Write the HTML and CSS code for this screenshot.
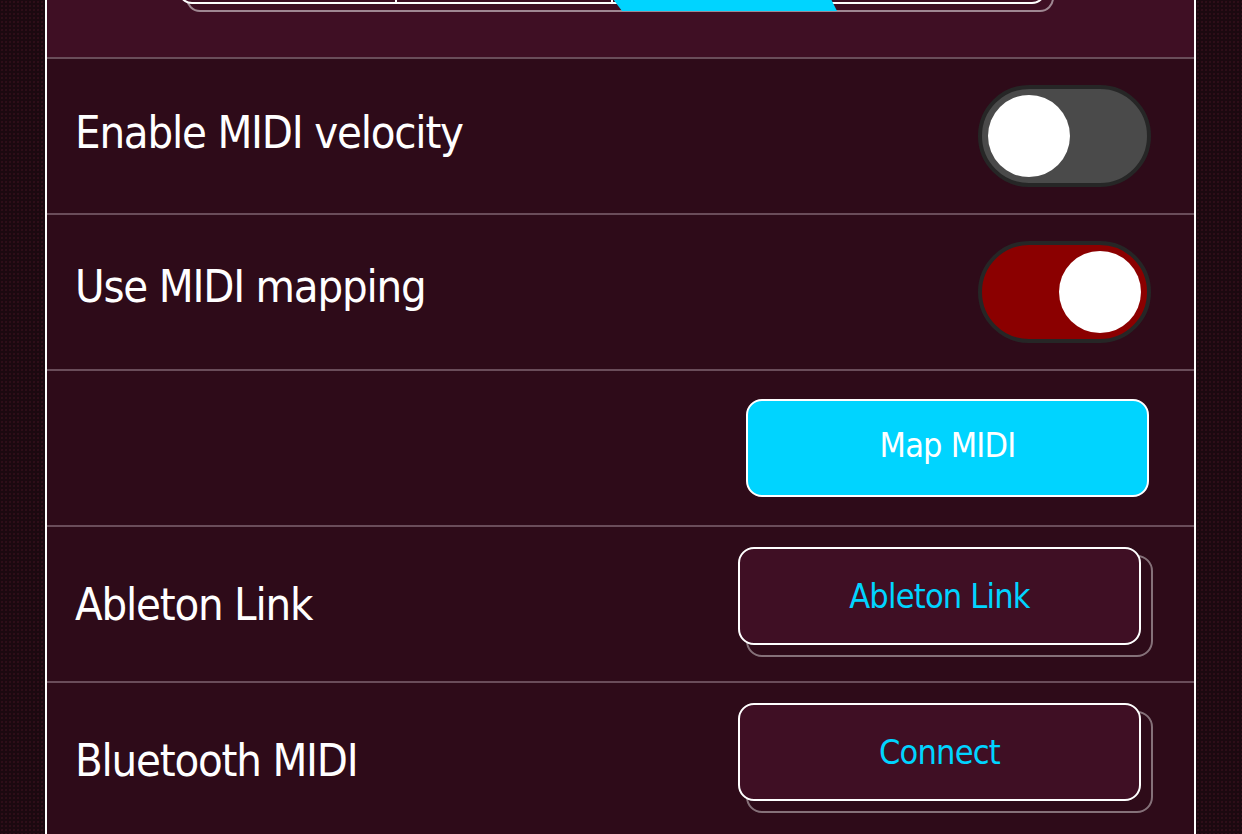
FILE: index.html
```html
<!DOCTYPE html>
<html lang="en">
<head>
<meta charset="utf-8">
<title>MIDI Settings</title>
<link rel="stylesheet" href="styles.css">
</head>
<body>
<div class="panel">
  <div class="top">
    <div class="seg-wrap">
      <div class="seg-shadow"></div>
      <div class="seg">
        <div class="seg-cell"></div>
        <div class="seg-cell"></div>
        <div class="seg-cell"></div>
        <div class="seg-cell seg-cell--last"></div>
        <div class="seg-pressed"></div>
      </div>
    </div>
  </div>

  <div class="row">
    <span class="label label--lift">Enable MIDI velocity</span>
    <div class="toggle"><div class="knob"></div></div>
  </div>

  <div class="row">
    <span class="label label--lift2">Use MIDI mapping</span>
    <div class="toggle toggle--on"><div class="knob"></div></div>
  </div>

  <div class="row row--end">
    <div class="btn-wrap btn-wrap--pressed">
      <div class="btn btn--active">Map MIDI</div>
    </div>
  </div>

  <div class="row">
    <span class="label">Ableton Link</span>
    <div class="btn-wrap">
      <div class="btn">Ableton Link</div>
    </div>
  </div>

  <div class="row">
    <span class="label">Bluetooth MIDI</span>
    <div class="btn-wrap">
      <div class="btn">Connect</div>
    </div>
  </div>
</div>
</body>
</html>
```

FILE: styles.css
```css
* { box-sizing: border-box; }

html, body {
  margin: 0;
  padding: 0;
  height: 834px;
  overflow: hidden;
}

body {
  background-color: #1b0910;
  background-image: radial-gradient(rgba(110, 30, 55, 0.35) 0.6px, transparent 0.9px);
  background-size: 4px 4px;
  font-family: "DejaVu Sans Condensed", "DejaVu Sans", sans-serif;
  color: #ffffff;
}

.panel {
  margin-left: 45px;
  width: 1151px;
  min-height: 834px;
  background: #2e0b19;
  border-left: 2px solid #ffffff;
  border-right: 2px solid #ffffff;
}

.top {
  height: 59px;
  background: #3f0f24;
  border-bottom: 2px solid #6a4d5a;
  overflow: hidden;
}

.seg-wrap {
  position: relative;
  width: 868px;
  height: 90px;
  margin-left: 131px;
  margin-top: -86px;
}

.seg-shadow {
  position: absolute;
  left: 8px;
  top: 8px;
  width: 868px;
  height: 90px;
  border: 2px solid rgba(255, 255, 255, 0.5);
  border-radius: 14px;
}

.seg {
  position: relative;
  display: flex;
  width: 868px;
  height: 90px;
  border: 2px solid #ffffff;
  border-radius: 14px;
  background: #3f0f24;
}

.seg-cell {
  flex: 1;
  border-right: 2px solid #ffffff;
}

.seg-cell--last { border-right: none; }

.seg-pressed {
  position: absolute;
  left: 433px;
  bottom: -9px;
  width: 224px;
  height: 12px;
  background: #00d4ff;
  clip-path: polygon(0 0, 218px 0, 224px 100%, 9px 100%);
}

.row {
  display: flex;
  align-items: center;
  justify-content: space-between;
  height: 156px;
  padding: 0 43px 0 28px;
  border-bottom: 2px solid #6a4d5a;
}

.row--end { justify-content: flex-end; }

.label {
  font-size: 45px;
  letter-spacing: -1.2px;
  line-height: 1;
  color: #ffffff;
  white-space: nowrap;
}

.label--lift { margin-bottom: 8px; }
.label--lift2 { margin-bottom: 12px; }

.toggle {
  display: flex;
  width: 173px;
  height: 102px;
  padding: 6px;
  border: 4px solid #262626;
  border-radius: 51px;
  background: #4a4a4a;
}

.toggle--on {
  justify-content: flex-end;
  background: #8b0000;
}

.knob {
  width: 82px;
  height: 82px;
  border-radius: 50%;
  background: #ffffff;
}

.btn-wrap {
  position: relative;
  width: 411px;
  height: 106px;
  margin-right: 2px;
  margin-bottom: 8px;
}

.btn-wrap::after {
  content: "";
  position: absolute;
  left: 8px;
  top: 8px;
  width: 403px;
  height: 98px;
  border: 2px solid rgba(255, 255, 255, 0.42);
  border-radius: 16px;
  z-index: 0;
}

.btn-wrap--pressed { padding: 8px 0 0 8px; }
.btn-wrap--pressed::after { display: none; }

.btn {
  position: relative;
  z-index: 1;
  display: flex;
  align-items: center;
  justify-content: center;
  width: 403px;
  height: 98px;
  border: 2px solid #ffffff;
  border-radius: 16px;
  background: #3f0f24;
  color: #00d4ff;
  font-size: 34px;
  letter-spacing: -0.8px;
  line-height: 1;
}

.btn--active {
  background: #00d4ff;
  color: #ffffff;
  padding-bottom: 6px;
}
```
